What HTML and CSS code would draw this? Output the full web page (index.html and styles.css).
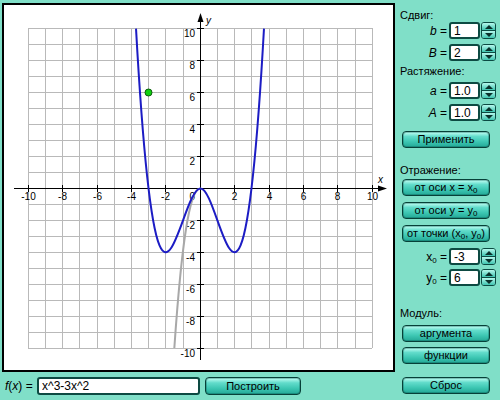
FILE: index.html
```html
<!DOCTYPE html>
<html lang="ru">
<head>
<meta charset="utf-8">
<title>Графики функций</title>
<link rel="stylesheet" href="styles.css">
</head>
<body>
<div class="app">
  <div class="main">
    <div class="graph">
      <svg width="389" height="365" viewBox="4 5 389 365" class="plot">
        <path class="grid" d="M28.5 28V348M45.5 28V348M62.5 28V348M79.5 28V348M97.5 28V348M114.5 28V348M131.5 28V348M148.5 28V348M165.5 28V348M183.5 28V348M200.5 28V348M217.5 28V348M234.5 28V348M251.5 28V348M269.5 28V348M286.5 28V348M303.5 28V348M320.5 28V348M337.5 28V348M355.5 28V348M372.5 28V348
        M28 28.5H372M28 44.5H372M28 60.5H372M28 76.5H372M28 92.5H372M28 108.5H372M28 124.5H372M28 140.5H372M28 156.5H372M28 172.5H372M28 188.5H372M28 204.5H372M28 220.5H372M28 236.5H372M28 252.5H372M28 268.5H372M28 284.5H372M28 300.5H372M28 316.5H372M28 332.5H372M28 348.5H372"/>
        <path class="axis" d="M14 188.5H380M200.5 360V22
        M28.5 185v7M62.5 185v7M97.5 185v7M131.5 185v7M165.5 185v7M234.5 185v7M269.5 185v7M303.5 185v7M337.5 185v7M372.5 185v7
        M197 28.5h7M197 60.5h7M197 92.5h7M197 124.5h7M197 156.5h7M197 220.5h7M197 252.5h7M197 284.5h7M197 316.5h7M197 348.5h7"/>
        <polygon class="arrow" points="387,188.5 378,185.5 378,191.5"/>
        <polygon class="arrow" points="200.5,13 197.5,22 203.5,22"/>
        <g class="ticks-x">
          <text x="28.5" y="200">-10</text>
          <text x="62.5" y="200">-8</text>
          <text x="97.5" y="200">-6</text>
          <text x="131.5" y="200">-4</text>
          <text x="165.5" y="200">-2</text>
          <text x="234.5" y="200">2</text>
          <text x="269.5" y="200">4</text>
          <text x="303.5" y="200">6</text>
          <text x="337.5" y="200">8</text>
          <text x="372.5" y="200">10</text>
        </g>
        <g class="ticks-y">
          <text x="195" y="37">10</text>
          <text x="195" y="69">8</text>
          <text x="195" y="101">6</text>
          <text x="195" y="133">4</text>
          <text x="195" y="165">2</text>
          <text x="195" y="200">0</text>
          <text x="195" y="229">-2</text>
          <text x="195" y="261">-4</text>
          <text x="195" y="293">-6</text>
          <text x="195" y="325">-8</text>
          <text x="195" y="357">-10</text>
        </g>
        <text class="axname" x="378" y="183">x</text>
        <text class="axname" x="206" y="24">y</text>
        <path class="orig" d="M174.34 348C182.89 223.63 191.45 188 200.5 188.5"/>
        <path class="curve" d="M136.02 28.58C157.34 409.41 178.67 188.5 200.5 188.5C221.33 188.5 242.66 409.41 263.98 28.58"/>
        <circle class="point" cx="148.5" cy="92.5" r="3.5"/>
      </svg>
    </div>
    <div class="formula">
      <span class="fname"><i>f</i>(<i>x</i>) =</span>
      <input class="field wide" type="text" value="x^3-3x^2">
      <button class="btn build">Построить</button>
    </div>
  </div>

  <div class="side">
    <div class="cap">Сдвиг:</div>
    <div class="param"><span class="pname"><i>b</i> =</span><input class="field" type="text" value="1"><span class="spin"><span class="up"></span><span class="dn"></span></span></div>
    <div class="param gap5"><span class="pname"><i>B</i> =</span><input class="field" type="text" value="2"><span class="spin"><span class="up"></span><span class="dn"></span></span></div>
    <div class="cap gap3">Растяжение:</div>
    <div class="param gap4"><span class="pname"><i>a</i> =</span><input class="field" type="text" value="1.0"><span class="spin"><span class="up"></span><span class="dn"></span></span></div>
    <div class="param gap5"><span class="pname"><i>A</i> =</span><input class="field" type="text" value="1.0"><span class="spin"><span class="up"></span><span class="dn"></span></span></div>
    <button class="btn gap10">Применить</button>

    <div class="cap gap15">Отражение:</div>
    <button class="btn gap2">от оси x = x<sub>0</sub></button>
    <button class="btn gap6">от оси y = y<sub>0</sub></button>
    <button class="btn gap6">от точки (x<sub>0</sub>, y<sub>0</sub>)</button>
    <div class="param gap6"><span class="pname">x<sub>0</sub> =</span><input class="field" type="text" value="-3"><span class="spin"><span class="up"></span><span class="dn"></span></span></div>
    <div class="param gap4"><span class="pname">y<sub>0</sub> =</span><input class="field" type="text" value="6"><span class="spin"><span class="up"></span><span class="dn"></span></span></div>

    <div class="cap gap20">Модуль:</div>
    <button class="btn gap5">аргумента</button>
    <button class="btn gap5">функции</button>

    <button class="btn reset">Сброс</button>
  </div>
</div>
</body>
</html>
```

FILE: styles.css
```css
* { box-sizing: border-box; }

html, body {
  margin: 0;
  padding: 0;
}

body {
  width: 500px;
  height: 400px;
  overflow: hidden;
  background: #80dfc8;
  font-family: "Liberation Sans", Arial, sans-serif;
  font-size: 11px;
  color: #000;
}

.app {
  display: grid;
  grid-template-columns: 395px 105px;
  height: 400px;
}

.main {
  display: flex;
  flex-direction: column;
}

.graph {
  margin: 3px 0 0 2px;
  width: 393px;
  height: 369px;
  border: 2px solid #000;
  background: #fff;
}

.plot { display: block; }

.grid {
  stroke: #b9b9b9;
  stroke-width: 1;
  fill: none;
}

.axis {
  stroke: #000;
  stroke-width: 1;
  fill: none;
}

.arrow { fill: #000; }

.ticks-x text,
.ticks-y text {
  font-family: "Liberation Sans", Arial, sans-serif;
  font-size: 10px;
  fill: #000;
}

.ticks-x text { text-anchor: middle; }
.ticks-y text { text-anchor: end; }

.axname {
  font-family: "Liberation Sans", Arial, sans-serif;
  font-size: 10px;
  font-style: italic;
}

.orig {
  fill: none;
  stroke: #a8a8a8;
  stroke-width: 2;
}

.curve {
  fill: none;
  stroke: #1c1cc4;
  stroke-width: 2;
}

.point {
  fill: #10d010;
  stroke: #0a5a0a;
  stroke-width: 1;
}

.formula {
  display: flex;
  align-items: center;
  padding: 5px 0 0 5px;
}

.fname {
  width: 32px;
  font-size: 12px;
}

.field {
  width: 31px;
  height: 17px;
  margin: 0 0 0 2px;
  padding: 0 0 0 3px;
  border: 2px solid #0d4a42;
  border-radius: 3px;
  background: #fff;
  font-family: "Liberation Sans", Arial, sans-serif;
  font-size: 12px;
  color: #000;
  outline: none;
}

.field.wide {
  width: 163px;
  height: 18px;
  margin-left: 0;
}

.btn {
  display: block;
  width: 88px;
  height: 17px;
  margin-left: 2px;
  padding: 0;
  border: 1px solid #074038;
  border-radius: 4px;
  background: linear-gradient(to bottom, #c4fff4 0%, #62dccb 30%, #3cc6b2 65%, #24a896 100%);
  box-shadow: inset 0 0 0 1px rgba(10, 90, 80, 0.35);
  font-family: "Liberation Sans", Arial, sans-serif;
  font-size: 11px;
  line-height: 15px;
  color: #000;
  white-space: nowrap;
}

.btn.build {
  width: 96px;
  height: 18px;
  margin-left: 5px;
}

.btn sub,
.pname sub {
  font-size: 8px;
  line-height: 0;
  vertical-align: -2px;
}

.side {
  display: flex;
  flex-direction: column;
  padding: 8px 0 0 5px;
}

.cap {
  line-height: 14px;
  height: 14px;
}

.param {
  display: flex;
  align-items: center;
  height: 17px;
}

.pname {
  width: 47px;
  text-align: right;
  font-size: 12px;
}

.pname i { font-style: italic; }

.spin {
  display: flex;
  flex-direction: column;
  width: 15px;
  height: 17px;
  margin-left: 1px;
  border: 1px solid #0b4a42;
  border-radius: 3px;
  overflow: hidden;
}

.spin span {
  flex: 1;
  display: flex;
  align-items: center;
  justify-content: center;
  background: linear-gradient(to bottom, #b6f8ec, #3ec4b0);
}

.spin .dn { border-top: 1px solid #0b4a42; }

.spin .up::after {
  content: "";
  border-left: 4px solid transparent;
  border-right: 4px solid transparent;
  border-bottom: 4px solid #0a302b;
}

.spin .dn::after {
  content: "";
  border-left: 4px solid transparent;
  border-right: 4px solid transparent;
  border-top: 4px solid #0a302b;
}

.gap2 { margin-top: 2px; }
.gap3 { margin-top: 3px; }
.gap4 { margin-top: 4px; }
.gap5 { margin-top: 5px; }
.gap6 { margin-top: 6px; }
.gap10 { margin-top: 10px; }
.gap15 { margin-top: 15px; }
.gap20 { margin-top: 20px; }

.reset {
  margin-top: auto;
  margin-bottom: 6px;
}
```
